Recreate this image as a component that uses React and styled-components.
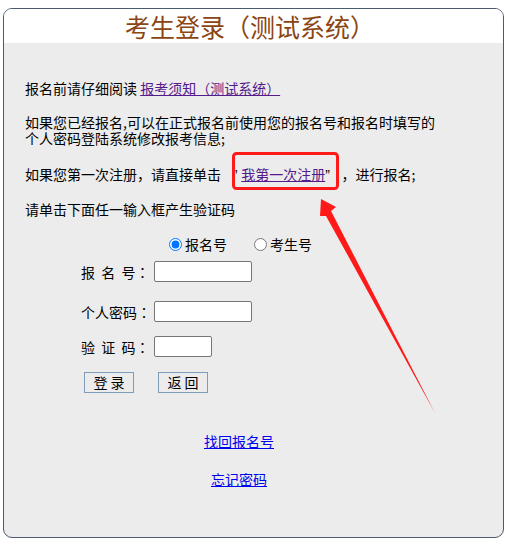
import styled, { createGlobalStyle } from "styled-components";

const GlobalStyle = createGlobalStyle`
  body {
    margin: 0;
    background: #ffffff;
    font-family: "Microsoft YaHei", "Noto Sans CJK SC", sans-serif;
    font-size: 14px;
    color: #000;
  }
`

function App() {
  return (
    <Page>
      <GlobalStyle />
      <Card>
        <Header>考生登录（测试系统）</Header>
        <Content>
          <P>报名前请仔细阅读 <TextLink href="#" $visited>报考须知（测试系统） </TextLink></P>
          <P $top={17.5}>如果您已经报名,可以在正式报名前使用您的报名号和报名时填写的个人密码登陆系统修改报考信息;</P>
          <P $top={20.5}>
            如果您第一次注册，请直接单击<Quote>{'\u00a0\u00a0\u00a0\u201d\u00a0'}</Quote>
            <TextLink href="#" $visited>我第一次注册</TextLink>
            <Quote>{'\u201d\u00a0\u00a0\u00a0'}</Quote>，进行报名;
          </P>
          <P $top={17.5}>请单击下面任一输入框产生验证码</P>

          <RadioRow>
            <RadioLabel><input type="radio" name="kind" defaultChecked />报名号</RadioLabel>
            <RadioLabel><input type="radio" name="kind" />考生号</RadioLabel>
          </RadioRow>

          <Form>
            <FieldRow>
              <FieldLabel>报&nbsp;&nbsp;名&nbsp;&nbsp;号<Colon>：</Colon></FieldLabel>
              <Input />
            </FieldRow>
            <FieldRow $top={19}>
              <FieldLabel>个人密码<Colon>：</Colon></FieldLabel>
              <Input type="password" />
            </FieldRow>
            <FieldRow $top={14}>
              <FieldLabel>验&nbsp;&nbsp;证&nbsp;&nbsp;码<Colon>：</Colon></FieldLabel>
              <Input $short />
            </FieldRow>
            <Buttons>
              <Button>登 录</Button>
              <Button>返 回</Button>
            </Buttons>
          </Form>

          <Links>
            <TextLink href="#">找回报名号</TextLink>
            <TextLink href="#" $top={22}>忘记密码</TextLink>
          </Links>
        </Content>
      </Card>

      {/* red annotation: box round the link and an arrow pointing at it */}
      <Overlay width="510" height="544" viewBox="0 0 510 544">
        <rect x="233.5" y="153.5" width="104" height="35" rx="3" fill="none" stroke="#ff1a1a" strokeWidth="3" />
        <polygon points="321,199 336,207 331,211 435,413 326,216 320,216" fill="#ff1a1a" />
      </Overlay>
    </Page>
  )
}

const Page = styled.div`
  position: relative;
  width: 510px;
  height: 544px;
  padding: 8px 6px 0 3px;
  box-sizing: border-box;
`

const Card = styled.div`
  height: 530px;
  box-sizing: border-box;
  border: 1px solid #4b5a6e;
  border-radius: 9px;
  background: #ececec;
  overflow: hidden;
`

const Header = styled.div`
  height: 34px;
  line-height: 34px;
  background: #ffffff;
  color: #8b4513;
  font-size: 25px;
  text-align: center;
  padding-right: 7px;
`

const Content = styled.div`
  width: 428px;
  padding: 37px 0 0 21px;
`

const P = styled.p`
  max-width: 422px;
  margin: ${p => p.$top || 0}px 0 0;
  line-height: 16px;
`

const Quote = styled.span`
  font-family: "Liberation Sans", sans-serif;
`

const TextLink = styled.a`
  display: ${p => p.$top ? 'block' : 'inline'};
  width: fit-content;
  margin: ${p => p.$top || 0}px auto 0;
  color: ${p => p.$visited ? '#551a8b' : '#0000ee'};
  text-decoration: underline;
`

const RadioRow = styled.div`
  margin-top: 19.5px;
  display: flex;
  justify-content: center;
  gap: 22px;
  line-height: 16px;
  padding-right: 2px;
`

const RadioLabel = styled.label`
  display: flex;
  align-items: center;
  input {
    margin: 0 3px 0 5px;
    accent-color: #0075ff;
  }
`

const Form = styled.div`
  margin: 9px 0 0 56px;
`

const FieldRow = styled.div`
  display: flex;
  align-items: center;
  margin-top: ${p => p.$top || 0}px;
`

const FieldLabel = styled.span`
  width: 73px;
  white-space: nowrap;
`

const Colon = styled.span`
  font-family: "Noto Sans CJK TC", sans-serif;
`

const Input = styled.input`
  width: ${p => p.$short ? 58 : 98}px;
  height: 21px;
  box-sizing: border-box;
  border: 1px solid #767676;
  border-radius: 2px;
  background: #fff;
  padding: 0 3px;
`

const Buttons = styled.div`
  display: flex;
  gap: 24px;
  margin: 15px 0 0 3px;
`

const Button = styled.button`
  width: 50px;
  height: 21px;
  padding: 0;
  border: 1px solid #7f9db9;
  background: #ececec;
  font-family: inherit;
  font-size: 14px;
  line-height: 19px;
  color: #000;
  cursor: pointer;
`

const Links = styled.div`
  margin-top: 40px;
  line-height: 16px;
  text-align: center;
`

const Overlay = styled.svg`
  position: absolute;
  top: 0;
  left: 0;
  pointer-events: none;
`

export default App
